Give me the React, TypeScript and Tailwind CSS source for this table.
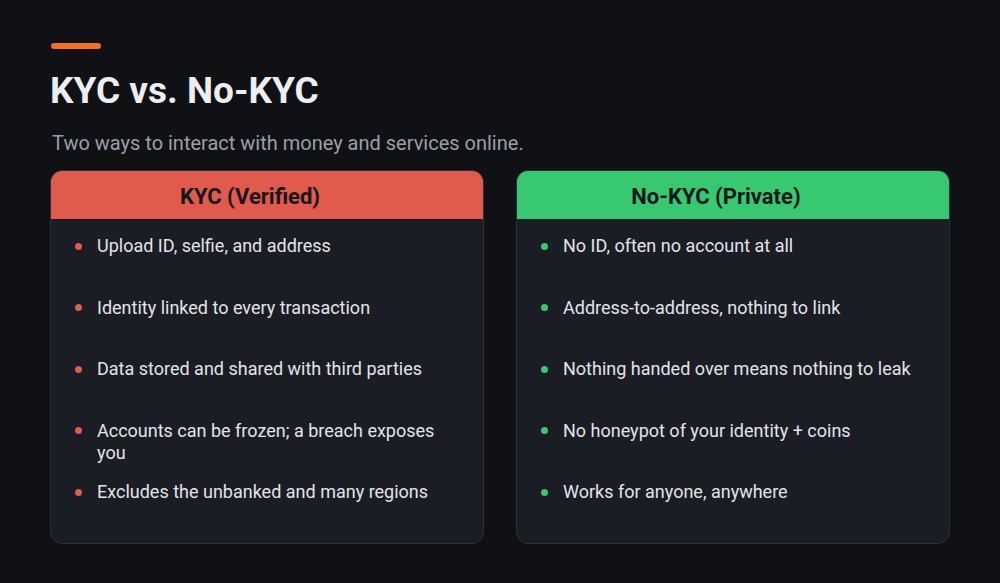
const kyc = [
  "Upload ID, selfie, and address",
  "Identity linked to every transaction",
  "Data stored and shared with third parties",
  "Accounts can be frozen; a breach exposes you",
  "Excludes the unbanked and many regions",
];

const noKyc = [
  "No ID, often no account at all",
  "Address-to-address, nothing to link",
  "Nothing handed over means nothing to leak",
  "No honeypot of your identity + coins",
  "Works for anyone, anywhere",
];

function Card({ title, items, header, dot }: { title: string; items: string[]; header: string; dot: string }) {
  return (
    <div className="flex flex-col overflow-hidden rounded-xl border border-[#2b2f37] bg-[#1a1d23]">
      <div className={`flex h-[48px] shrink-0 items-center justify-center pr-[34px] pt-[2px] text-[22px] font-bold text-[#15171b] ${header}`}>
        {title}
      </div>
      <ul className="grid flex-1 grid-rows-5 pt-4 pl-[24px] pr-8">
        {items.map((item) => (
          <li key={item} className="flex items-start gap-[15px]">
            <span className={`mt-[7.5px] h-[7px] w-[7px] shrink-0 rounded-full ${dot}`} />
            <span className="text-[18px] leading-[22px] text-[#e2e4e8]">{item}</span>
          </li>
        ))}
      </ul>
    </div>
  );
}

export default function App() {
  return (
    <div className="h-[583px] w-[1000px] bg-[#0f1115] px-[50px] pt-[43px] font-['Roboto',sans-serif]">
      <div className="ml-px h-[6px] w-[50px] rounded-full bg-[#f7701f]" />
      <h1 className="mt-[20px] text-[37px] font-bold leading-[44px] text-[#eceef1]">KYC vs. No-KYC</h1>
      <p className="mt-[18px] ml-[2px] text-[20px] leading-[24px] text-[#9aa0aa]">
        Two ways to interact with money and services online.
      </p>
      <div className="mt-[15px] grid h-[374px] grid-cols-2 gap-8">
        <Card title="KYC (Verified)" items={kyc} header="bg-[#e05a4e]" dot="bg-[#e05a4e]" />
        <Card title="No-KYC (Private)" items={noKyc} header="bg-[#38c872]" dot="bg-[#38c872]" />
      </div>
    </div>
  );
}
